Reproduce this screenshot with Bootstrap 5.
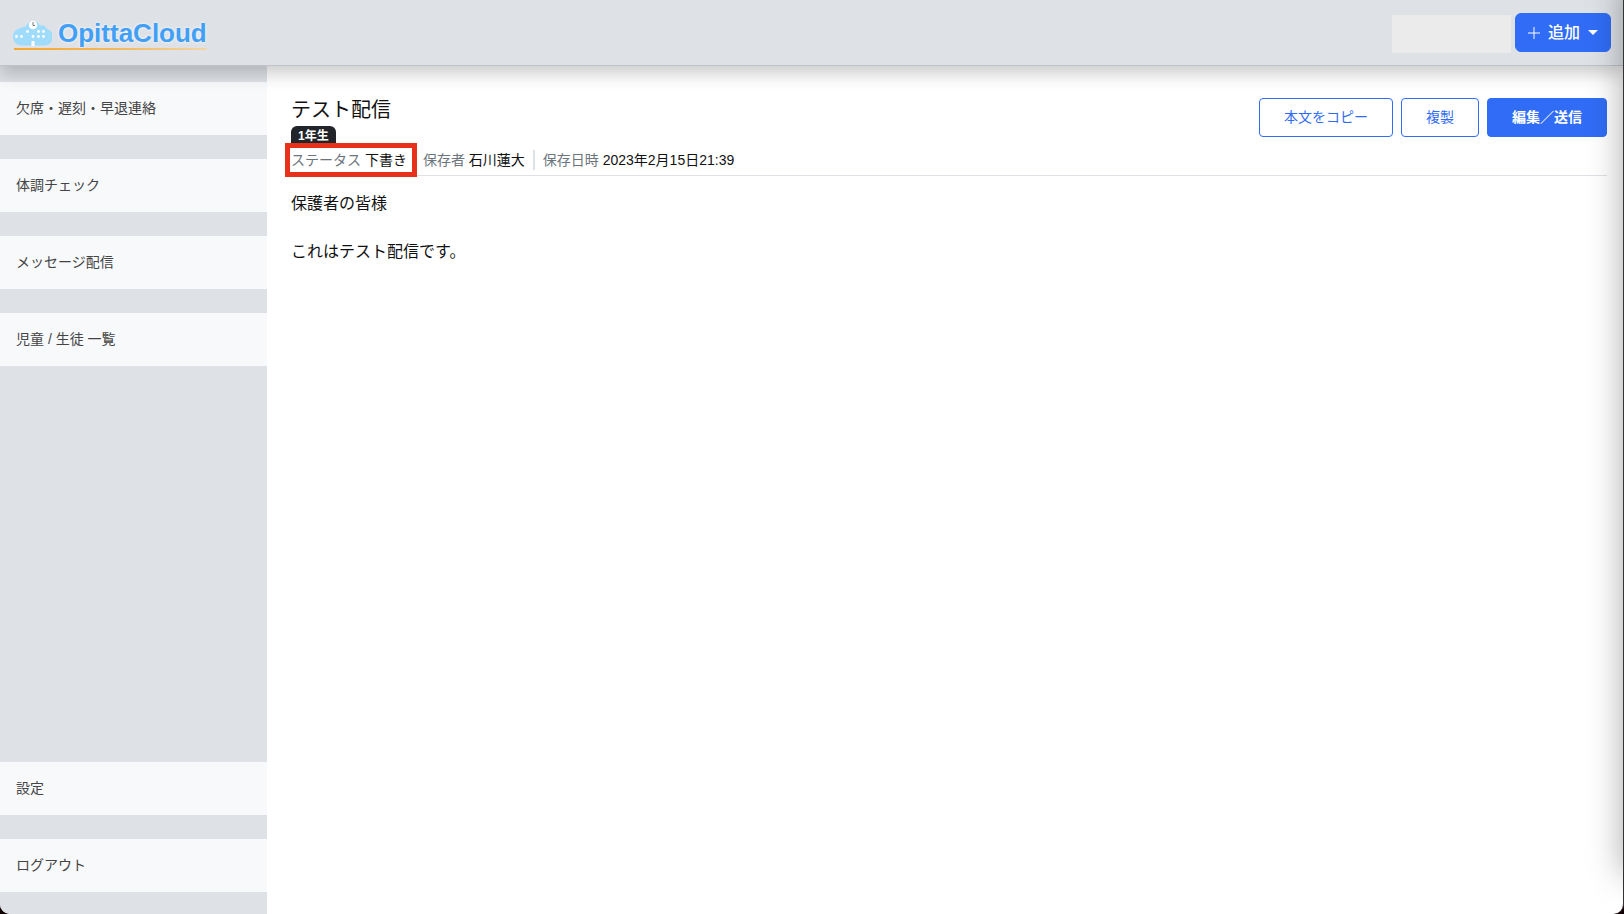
<!DOCTYPE html>
<html lang="ja">
<head>
<meta charset="utf-8">
<meta name="viewport" content="width=device-width, initial-scale=1">
<title>OpittaCloud</title>
<link href="https://cdn.jsdelivr.net/npm/bootstrap@5.3.0/dist/css/bootstrap.min.css" rel="stylesheet">
<style>
  html { background: #120004; }
  body {
    background: #120004;
    color: #111;
    font-family: "Liberation Sans", "Noto Sans CJK JP", sans-serif;
  }
  .app-window { background: #fff; border-right: 1px solid #333; border-radius: 0 0 10px 10px; overflow: hidden; }
  .app-header {
    height: 66px;
    background: #dee2e6;
    border-bottom: 1px solid #bfc2c8;
    box-shadow: 0 8px 16px rgba(0, 0, 0, .2);
    z-index: 2;
  }
  .brand-logo { gap: 6px; padding: 4px; }
  .brand-name {
    font-size: 26px; line-height: 30px; font-weight: 700; color: #419ff6;
    text-shadow: 0 0 3px #fff;
  }
  .brand-rule {
    left: 6px; right: 4px; bottom: 2px; height: 2px;
    background: linear-gradient(90deg, #f5a92f, #f3b95f 55%, #f3d5a6);
  }
  .account-slot { width: 119px; height: 38px; margin-top: 2px; background: #ebebeb; }
  .btn-primary { --bs-btn-bg: #306cf5; --bs-btn-border-color: #306cf5; }
  .btn-outline-primary { --bs-btn-color: #306cf5; --bs-btn-border-color: #306cf5; }
  .btn-add { height: 39px; width: 96px; padding: 0; border-radius: 6px; font-weight: 500; }
  .btn-action { height: 39px; padding: 0 24px; font-size: 14px; border-radius: 4px; }
  .btn-strong { font-weight: 700; }
  .side-nav { width: 267px; background: #dee2e6; padding: 16px 0 22px; }
  .side-link {
    display: block; padding: 16px; line-height: 21px; font-size: 14px;
    background: #f8f9fb; color: #444; text-decoration: none;
  }
  .page-title { font-size: 20px; line-height: 24px; font-weight: 400; }
  .grade-tag { font-size: 12px; line-height: 20px; height: 18px; padding: 0 7px; border-radius: 6px 6px 0 0; background: #212529; color: #fff; font-weight: 700; }
  .meta-row { font-size: 14px; line-height: 20px; padding: 6px 0 5px; border-bottom: 1px solid #dee2e6; }
  .meta-label { color: #6c757d; }
  .meta-sep { border-left: 2px solid #dee2e6; }
  .highlight-box { border: 5px solid #e8311b; top: -7px; right: -10px; bottom: -7px; left: -6px; }
  .message-body { padding-top: 16px; line-height: 24px; }
  .edge-panel {
    position: fixed; top: -20px; bottom: 40px; right: -99px; width: 100px;
    box-shadow: 0 0 32px rgba(0, 0, 0, .34); z-index: 5; pointer-events: none;
  }
</style>
</head>
<body>
<div class="app-window min-vh-100 d-flex flex-column">
  <header class="app-header position-relative d-flex align-items-center justify-content-between ps-2 pe-2">
    <a href="#" class="brand-logo position-relative d-flex align-items-center text-decoration-none">
      <svg width="40" height="30" viewBox="0 0 40 30" aria-hidden="true">
        <path fill="#9fdcfc" d="M9 27.500A8.800 8.800 0 0 1 8.500 10Q11 8.500 14 8.500Q14.500 5.500 17 4.500A7.200 7.200 0 0 1 28 7.500Q32.500 6.500 34.500 10.500A8.700 8.700 0 0 1 31 27.500Z"/>
        <circle cx="21" cy="7" r="4.300" fill="#fff"/>
        <path d="M21 4v3.500h2" stroke="#777" fill="none"/>
        <g fill="#fff"><circle cx="4.500" cy="18.500" r="1.400"/><circle cx="9.500" cy="18.500" r="1.400"/><circle cx="15.500" cy="13.500" r="1.400"/><circle cx="21" cy="18.500" r="1.400"/><circle cx="26.500" cy="13.500" r="1.400"/><circle cx="31.500" cy="13.500" r="1.400"/><circle cx="26.500" cy="18.500" r="1.400"/><circle cx="31.500" cy="18.500" r="1.400"/><path d="M19.500 28v-5h3v5z"/></g>
      </svg>
      <span class="brand-name">OpittaCloud</span>
      <span class="brand-rule position-absolute"></span>
    </a>
    <div class="d-flex align-items-center me-1">
      <div class="account-slot me-1"></div>
      <button type="button" class="btn btn-primary btn-add d-flex align-items-center justify-content-center gap-2">
        <svg width="12" height="12" viewBox="0 0 12 12" aria-hidden="true"><path d="M6 0v12M0 6h12" stroke="#fff" fill="none"/></svg>
        <span>追加</span>
        <svg width="10" height="5" viewBox="0 0 10 5" aria-hidden="true"><path d="M0 0h10L5 5z" fill="#fff"/></svg>
      </button>
    </div>
  </header>
  <div class="d-flex flex-grow-1">
    <nav class="side-nav flex-shrink-0 d-flex flex-column justify-content-between">
      <div class="d-flex flex-column gap-4">
        <a href="#" class="side-link">欠席・遅刻・早退連絡</a>
        <a href="#" class="side-link">体調チェック</a>
        <a href="#" class="side-link">メッセージ配信</a>
        <a href="#" class="side-link">児童 / 生徒 一覧</a>
      </div>
      <div class="d-flex flex-column gap-4">
        <a href="#" class="side-link">設定</a>
        <a href="#" class="side-link">ログアウト</a>
      </div>
    </nav>
    <main class="flex-grow-1 ps-4 pe-3 pt-4">
      <div class="d-flex justify-content-between align-items-start pt-2">
        <div class="d-flex flex-column align-items-start gap-1">
          <h1 class="page-title m-0">テスト配信</h1>
          <span class="grade-tag">1年生</span>
        </div>
        <div class="d-flex gap-2">
          <button type="button" class="btn btn-outline-primary btn-action">本文をコピー</button>
          <button type="button" class="btn btn-outline-primary btn-action">複製</button>
          <button type="button" class="btn btn-primary btn-action btn-strong">編集／送信</button>
        </div>
      </div>
      <div class="meta-row d-flex">
        <div class="position-relative me-2"><span class="meta-label">ステータス</span> 下書き<span class="highlight-box position-absolute"></span></div>
        <div class="px-2"><span class="meta-label">保存者</span> 石川蓮大</div>
        <div class="meta-sep ps-2"><span class="meta-label">保存日時</span> 2023年2月15日21:39</div>
      </div>
      <div class="message-body">
        <p class="mb-4">保護者の皆様</p>
        <p class="mb-0">これはテスト配信です。</p>
      </div>
    </main>
  </div>
</div>
<div class="edge-panel"></div>
<script src="https://cdn.jsdelivr.net/npm/bootstrap@5.3.0/dist/js/bootstrap.bundle.min.js"></script>
</body>
</html>
